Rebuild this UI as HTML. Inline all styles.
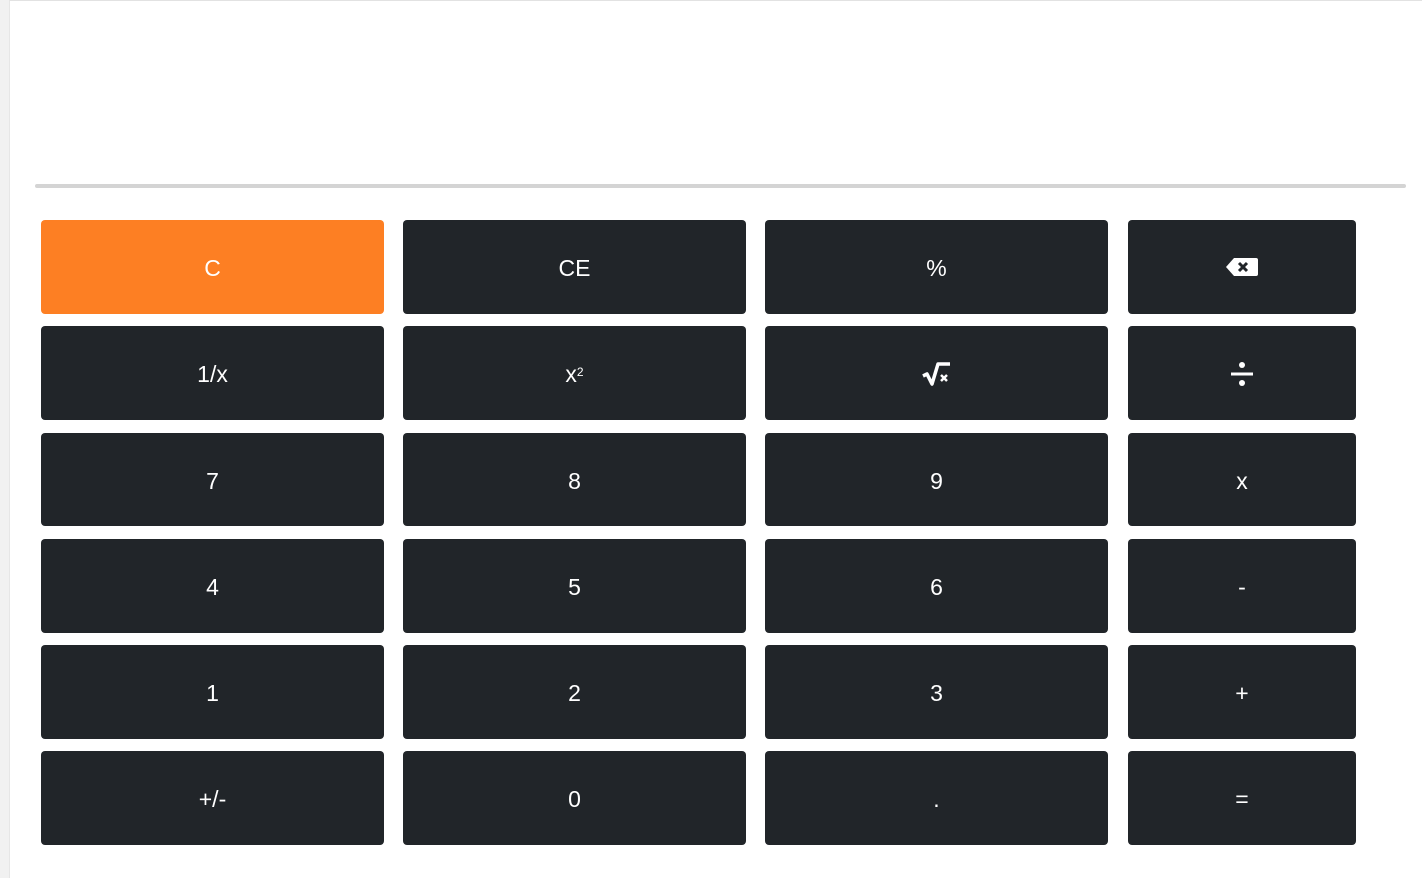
<!DOCTYPE html>
<html><head><style>
html,body{margin:0;padding:0;width:1422px;height:878px;overflow:hidden;background:#f1f1f1;font-family:"Liberation Sans",sans-serif}
.wrap{position:absolute;left:9px;top:0;width:1413px;height:878px;background:#fff;border-top:1px solid #e2e2e2;border-left:1px solid #e6e6e6;box-sizing:border-box}
.line{position:absolute;left:35px;top:184px;width:1371px;height:4px;background:#d4d4d4;border-radius:2px}
.b{position:absolute;background:#212529;color:#fff;border-radius:4px;display:flex;align-items:center;justify-content:center;font-size:23px;box-sizing:border-box;padding-top:3px}
.o{background:#fd7f23}
</style></head><body>
<div class="wrap"></div>
<div class="line"></div>
<div class="b o" style="left:41px;top:220px;width:343px;height:94px">C</div>
<div class="b" style="left:403px;top:220px;width:343px;height:94px">CE</div>
<div class="b" style="left:765px;top:220px;width:343px;height:94px">%</div>
<div class="b" style="left:1128px;top:220px;width:228px;height:94px;padding-top:0"><svg width="34" height="20" viewBox="0 0 34 20"><path d="M9 1H31a2 2 0 0 1 2 2V17a2 2 0 0 1-2 2H9L1 10Z" fill="#fff"/><path d="M14 6l8 8M22 6l-8 8" stroke="#212529" stroke-width="3"/></svg></div>
<div class="b" style="left:41px;top:326px;width:343px;height:94px">1/x</div>
<div class="b" style="left:403px;top:326px;width:343px;height:94px">x<sup style="font-size:12px;position:relative;top:-3px">2</sup></div>
<div class="b" style="left:765px;top:326px;width:343px;height:94px"><svg width="30" height="26" viewBox="0 0 30 26"><path d="M1 14l4-2 5 10 6-20h12" fill="none" stroke="#fff" stroke-width="3.5" stroke-linejoin="round"/><path d="M19 13l6 6M25 13l-6 6" stroke="#fff" stroke-width="2.5"/></svg></div>
<div class="b" style="left:1128px;top:326px;width:228px;height:94px;padding-top:2px"><svg width="24" height="26" viewBox="0 0 24 26"><circle cx="12" cy="4" r="3" fill="#fff"/><circle cx="12" cy="22" r="3" fill="#fff"/><rect x="1" y="11.5" width="22" height="3" fill="#fff"/></svg></div>
<div class="b" style="left:41px;top:433px;width:343px;height:93px">7</div>
<div class="b" style="left:403px;top:433px;width:343px;height:93px">8</div>
<div class="b" style="left:765px;top:433px;width:343px;height:93px">9</div>
<div class="b" style="left:1128px;top:433px;width:228px;height:93px">x</div>
<div class="b" style="left:41px;top:539px;width:343px;height:94px">4</div>
<div class="b" style="left:403px;top:539px;width:343px;height:94px">5</div>
<div class="b" style="left:765px;top:539px;width:343px;height:94px">6</div>
<div class="b" style="left:1128px;top:539px;width:228px;height:94px">-</div>
<div class="b" style="left:41px;top:645px;width:343px;height:94px">1</div>
<div class="b" style="left:403px;top:645px;width:343px;height:94px">2</div>
<div class="b" style="left:765px;top:645px;width:343px;height:94px">3</div>
<div class="b" style="left:1128px;top:645px;width:228px;height:94px">+</div>
<div class="b" style="left:41px;top:751px;width:343px;height:94px">+/-</div>
<div class="b" style="left:403px;top:751px;width:343px;height:94px">0</div>
<div class="b" style="left:765px;top:751px;width:343px;height:94px">.</div>
<div class="b" style="left:1128px;top:751px;width:228px;height:94px">=</div>
</body></html>
